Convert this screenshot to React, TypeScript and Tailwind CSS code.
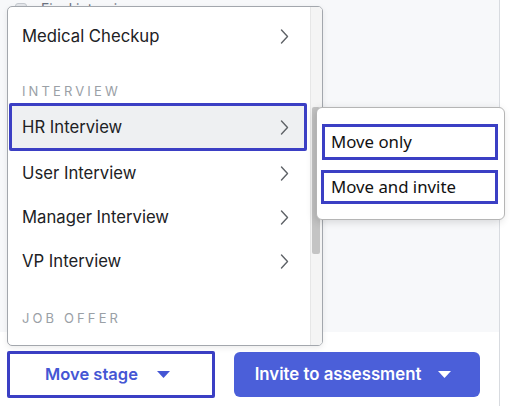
import { type ReactNode } from "react";

const Chevron = () => (
  <svg width="9" height="15" viewBox="0 0 9 15" fill="none">
    <path
      d="M1.5 1 L7.5 7.5 L1.5 14"
      stroke="#5f6368"
      strokeWidth="1.4"
      strokeLinecap="round"
      strokeLinejoin="round"
    />
  </svg>
);

const Caret = ({ color }: { color: string }) => (
  <svg width="13" height="7" viewBox="0 0 13 7">
    <path d="M0 0 H13 L6.5 7 Z" fill={color} />
  </svg>
);

const SectionLabel = ({
  children,
  className,
}: {
  children: ReactNode;
  className: string;
}) => (
  <div
    className={`pl-[14px] text-[13px] leading-[14px] tracking-[0.24em] text-[#9aa0a6] ${className}`}
  >
    {children}
  </div>
);

const StageRow = ({
  label,
  active = false,
}: {
  label: string;
  active?: boolean;
}) => (
  <div
    className={`ml-[1px] flex w-[298px] items-center justify-between pl-[13px] pr-[18px] text-[16.7px] text-[#202124] ${
      active
        ? "h-[48px] rounded-[2px] bg-[#eef0f2] shadow-[inset_0_0_0_3px_#3b3fc4]"
        : "h-[44px]"
    }`}
  >
    <span className="pt-[2px]">{label}</span>
    <Chevron />
  </div>
);

const StageMenu = () => (
  <div className="absolute left-[7px] top-[6px] flex h-[340px] w-[316px] overflow-hidden rounded-[5px] border border-[#a3a7ad] bg-white shadow-[0_2px_6px_rgba(0,0,0,0.08)]">
    <div className="flex-1 pt-[7px]">
      <StageRow label="Medical Checkup" />
      <SectionLabel className="pt-[26px] pb-[5px]">INTERVIEW</SectionLabel>
      <StageRow label="HR Interview" active />
      <StageRow label="User Interview" />
      <StageRow label="Manager Interview" />
      <StageRow label="VP Interview" />
      <SectionLabel className="pt-[28px]">JOB OFFER</SectionLabel>
    </div>
    {/* scrollbar */}
    <div className="relative w-[12px] border-l border-[#e6e6e6] bg-[#f4f4f4]">
      <div className="absolute left-[1px] top-[100px] h-[147px] w-[8px] rounded-[2px] bg-[#c4c4c4]" />
    </div>
  </div>
);

const MoveSubmenu = () => (
  <div className="absolute left-[316px] top-[107px] flex h-[113px] w-[189px] flex-col gap-[10px] rounded-[6px] border border-[#b5b5b5] bg-white px-[5px] pt-[16px] font-['Noto_Sans',sans-serif] text-[16.8px] text-[#111] shadow-[-2px_2px_8px_rgba(0,0,0,0.14)]">
    <div className="flex h-[36px] w-[176px] items-center border-[3px] border-[#3b3fc4] pl-[6px]">
      Move only
    </div>
    <div className="-ml-[1px] flex h-[34px] w-[177px] items-center border-[3px] border-[#3b3fc4] pl-[7px]">
      Move and invite
    </div>
  </div>
);

export default function App() {
  return (
    <div className="relative h-[406px] w-[510px] overflow-hidden bg-white font-['Inter',sans-serif]">
      <div className="flex h-full w-[500px] flex-col border-r border-[#d8dbe0]">
        <div className="h-[332px] bg-[#f7f8fa]">
          {/* candidate row behind the open dropdown */}
          <div className="mt-[1px] flex items-center gap-[14px] pl-[15px] text-[14px] leading-[16px] text-[#6b7280]">
            <span className="h-[12px] w-[12px] rounded-[3px] border border-[#c5c9cf] bg-[#e5e7eb]" />
            <span>Final interview</span>
          </div>
        </div>
        <div className="flex items-center gap-[19px] pl-[7px] pt-[19px]">
          <button className="flex h-[47px] w-[208px] items-center justify-center gap-[19px] rounded-[2px] border-[3px] border-[#3b3fc4] bg-white pr-[7px] text-[16.5px] font-semibold text-[#4556d4]">
            Move stage
            <Caret color="#4556d4" />
          </button>
          <button className="flex h-[45px] w-[246px] items-center justify-center gap-[17px] rounded-[6px] bg-[#4b5fd9] pr-[8px] text-[16.8px] font-semibold text-white">
            Invite to assessment
            <Caret color="#ffffff" />
          </button>
        </div>
      </div>
      <StageMenu />
      <MoveSubmenu />
    </div>
  );
}
